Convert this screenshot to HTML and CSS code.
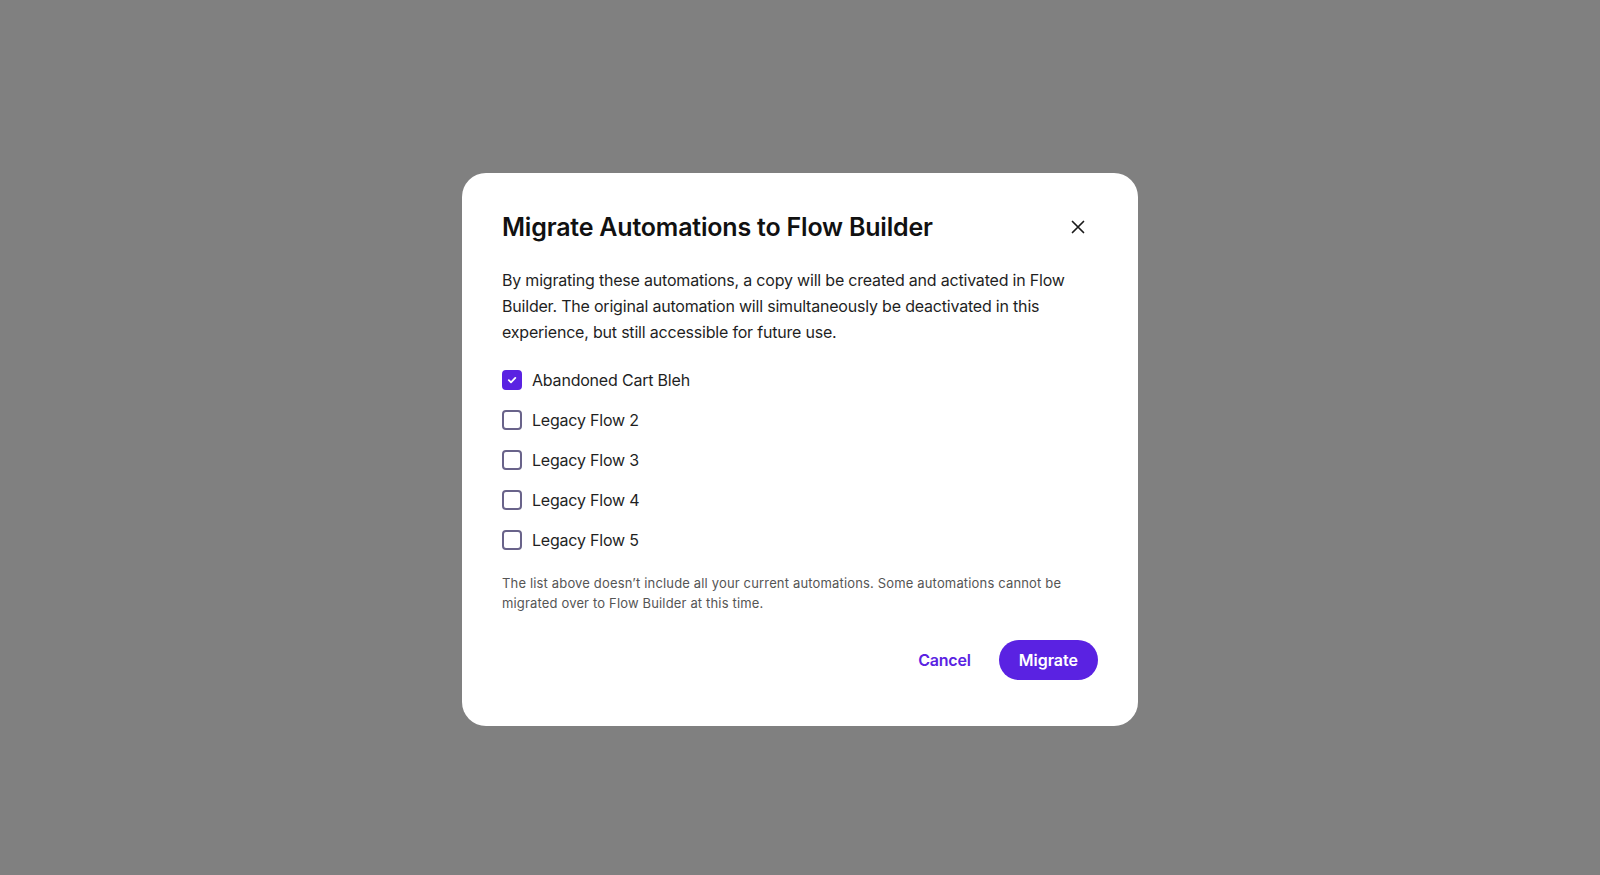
FILE: index.html
```html
<!DOCTYPE html>
<html lang="en">
<head>
<meta charset="utf-8">
<title>Migrate Automations</title>
<link rel="stylesheet" href="styles.css">
</head>
<body>
<div class="overlay">
  <div class="modal" role="dialog">
    <div class="modal-header">
      <h2 class="modal-title">Migrate Automations to Flow Builder</h2>
      <button class="close-btn" aria-label="Close">
        <svg width="14" height="14" viewBox="0 0 14 14"><path d="M1.5 1.5 L12.5 12.5 M12.5 1.5 L1.5 12.5" stroke="#1a1a1a" stroke-width="1.7" stroke-linecap="round" fill="none"/></svg>
      </button>
    </div>
    <p class="modal-text">By migrating these automations, a copy will be created and activated in Flow Builder. The original automation will simultaneously be deactivated in this experience, but still accessible for future use.</p>
    <ul class="check-list">
      <li class="check-row"><span class="box checked"><svg width="12" height="12" viewBox="0 0 12 12"><path d="M2.8 6.2 L5 8.3 L9.3 3.9" stroke="#fff" stroke-width="1.8" stroke-linecap="round" stroke-linejoin="round" fill="none"/></svg></span><span class="label">Abandoned Cart Bleh</span></li>
      <li class="check-row"><span class="box"></span><span class="label">Legacy Flow 2</span></li>
      <li class="check-row"><span class="box"></span><span class="label">Legacy Flow 3</span></li>
      <li class="check-row"><span class="box"></span><span class="label">Legacy Flow 4</span></li>
      <li class="check-row"><span class="box"></span><span class="label">Legacy Flow 5</span></li>
    </ul>
    <p class="footnote">The list above doesn’t include all your current automations. Some automations cannot be migrated over to Flow Builder at this time.</p>
    <div class="modal-footer">
      <button class="btn btn-text">Cancel</button>
      <button class="btn btn-primary">Migrate</button>
    </div>
  </div>
</div>
</body>
</html>
```

FILE: styles.css
```css
* { box-sizing: border-box; }
html, body {
  margin: 0;
  padding: 0;
  background: #808080;
  font-family: Inter, "Noto Sans", "Liberation Sans", sans-serif;
}
.overlay {
  width: 1600px;
  height: 875px;
  padding-top: 173px;
  display: flex;
  justify-content: center;
  align-items: flex-start;
}
.modal {
  width: 676px;
  background: #ffffff;
  border-radius: 24px;
  padding: 40px 40px 46px 40px;
}
.modal-header {
  display: flex;
  justify-content: space-between;
  align-items: center;
  height: 28px;
}
.modal-title {
  margin: 0;
  font-size: 25px;
  line-height: 28px;
  font-weight: 600;
  color: #111111;
  letter-spacing: -0.2px;
}
.close-btn {
  width: 40px;
  height: 28px;
  border: 0;
  padding: 0;
  background: transparent;
  display: flex;
  align-items: center;
  justify-content: center;
}
.modal-text {
  margin: 26px 0 0 0;
  font-size: 16px;
  line-height: 26px;
  color: #1f1f1f;
  letter-spacing: -0.2px;
}
.check-list {
  list-style: none;
  margin: 23px 0 0 0;
  padding: 0;
  display: flex;
  flex-direction: column;
  gap: 16px;
}
.check-row {
  display: flex;
  align-items: center;
  height: 24px;
  gap: 10px;
}
.box {
  width: 20px;
  height: 20px;
  border: 2px solid #69638a;
  border-radius: 4px;
  display: flex;
  align-items: center;
  justify-content: center;
  flex: none;
}
.box.checked {
  background: #5a22e2;
  border-color: #5a22e2;
}
.label {
  font-size: 16px;
  line-height: 24px;
  color: #1f1f1f;
  letter-spacing: -0.2px;
}
.footnote {
  margin: 21px 0 0 0;
  font-size: 13px;
  line-height: 20px;
  color: #555555;
  letter-spacing: 0.16px;
}
.modal-footer {
  margin-top: 27px;
  display: flex;
  justify-content: flex-end;
  align-items: center;
  gap: 12px;
}
.btn {
  height: 40px;
  border: 0;
  font-family: inherit;
  font-size: 16px;
  font-weight: 600;
  border-radius: 20px;
  cursor: pointer;
}
.btn-text {
  background: transparent;
  color: #5a22e2;
  padding: 0 16px;
  letter-spacing: -0.2px;
}
.btn-primary {
  background: #5a22e2;
  color: #ffffff;
  padding: 0 20px;
}
```
